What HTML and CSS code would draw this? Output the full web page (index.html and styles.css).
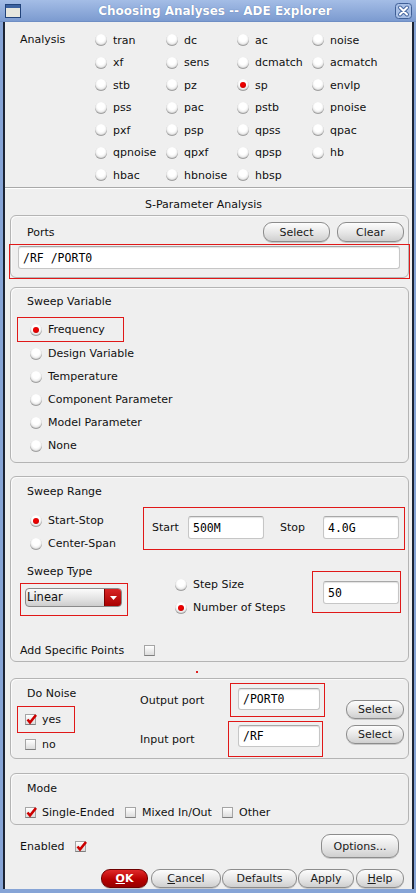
FILE: index.html
```html
<!DOCTYPE html>
<html>
<head>
<meta charset="utf-8">
<title>Choosing Analyses -- ADE Explorer</title>
<link rel="stylesheet" href="styles.css">
</head>
<body>
<div class="frame">
  <div class="titlebar">
    <svg class="winicon" width="16" height="14" viewBox="0 0 16 14">
      <rect x="0.5" y="0.5" width="15" height="13" fill="#e6e6de" stroke="#22437a"/>
      <rect x="1" y="1" width="14" height="3" fill="#3c62a0"/>
    </svg>
    <div class="title">Choosing Analyses -- ADE Explorer</div>
    <svg class="closebtn" width="17" height="16" viewBox="0 0 17 16">
      <rect x="0.5" y="0.5" width="16" height="15" rx="3" fill="#a9c0e6" stroke="#3f5f96"/>
      <path d="M5 4.5 L12 11.5 M12 4.5 L5 11.5" stroke="#4a6aa2" stroke-width="4" stroke-linecap="round"/>
      <path d="M5 4.5 L12 11.5 M12 4.5 L5 11.5" stroke="#ffffff" stroke-width="2" stroke-linecap="round"/>
    </svg>
  </div>
  <div class="body">
    <div class="content">
      <div class="analysis">
        <div class="alabel">Analysis</div>
        <div class="ritem"><span class="radio"></span>tran</div>
        <div class="ritem"><span class="radio"></span>dc</div>
        <div class="ritem"><span class="radio"></span>ac</div>
        <div class="ritem"><span class="radio"></span>noise</div>
        <div class="ritem"><span class="radio"></span>xf</div>
        <div class="ritem"><span class="radio"></span>sens</div>
        <div class="ritem"><span class="radio"></span>dcmatch</div>
        <div class="ritem"><span class="radio"></span>acmatch</div>
        <div class="ritem"><span class="radio"></span>stb</div>
        <div class="ritem"><span class="radio"></span>pz</div>
        <div class="ritem"><span class="radio on"></span>sp</div>
        <div class="ritem"><span class="radio"></span>envlp</div>
        <div class="ritem"><span class="radio"></span>pss</div>
        <div class="ritem"><span class="radio"></span>pac</div>
        <div class="ritem"><span class="radio"></span>pstb</div>
        <div class="ritem"><span class="radio"></span>pnoise</div>
        <div class="ritem"><span class="radio"></span>pxf</div>
        <div class="ritem"><span class="radio"></span>psp</div>
        <div class="ritem"><span class="radio"></span>qpss</div>
        <div class="ritem"><span class="radio"></span>qpac</div>
        <div class="ritem"><span class="radio"></span>qpnoise</div>
        <div class="ritem"><span class="radio"></span>qpxf</div>
        <div class="ritem"><span class="radio"></span>qpsp</div>
        <div class="ritem"><span class="radio"></span>hb</div>
        <div class="ritem"><span class="radio"></span>hbac</div>
        <div class="ritem"><span class="radio"></span>hbnoise</div>
        <div class="ritem"><span class="radio"></span>hbsp</div>
      </div>
      <div class="sep"></div>
      <div class="heading">S-Parameter Analysis</div>

      <div class="group g-ports">
        <div class="ports-row">
          <span class="glabel-inline">Ports</span>
          <span class="flexfill"></span>
          <span class="btn b-sel">Select</span>
          <span class="btn b-clear">Clear</span>
        </div>
        <div class="redbox rb-ports"><div class="field f-ports">/RF /PORT0</div></div>
      </div>

      <div class="group g-var">
        <div class="glabel">Sweep Variable</div>
        <div class="redbox rb-freq"><span class="radio on"></span><span class="rtext">Frequency</span></div>
        <div class="vrow"><span class="radio"></span><span class="rtext">Design Variable</span></div>
        <div class="vrow"><span class="radio"></span><span class="rtext">Temperature</span></div>
        <div class="vrow"><span class="radio"></span><span class="rtext">Component Parameter</span></div>
        <div class="vrow"><span class="radio"></span><span class="rtext">Model Parameter</span></div>
        <div class="vrow"><span class="radio"></span><span class="rtext">None</span></div>
      </div>

      <div class="group g-range">
        <div class="glabel g-range-label">Sweep Range</div>
        <div class="range-row">
          <div class="range-left">
            <div class="srow"><span class="radio on"></span><span class="rtext">Start-Stop</span></div>
            <div class="srow"><span class="radio"></span><span class="rtext">Center-Span</span></div>
          </div>
          <div class="redbox rb-startstop">
            <span class="lbl-start">Start</span>
            <span class="field f-num">500M</span>
            <span class="lbl-stop">Stop</span>
            <span class="field f-num">4.0G</span>
          </div>
        </div>
        <div class="type-row">
          <div class="type-col1">
            <div class="glabel-block">Sweep Type</div>
            <div class="redbox rb-dd">
              <div class="dropdown">
                <span class="dd-text">Linear</span>
                <span class="dd-arrow">
                  <svg width="9" height="6" viewBox="0 0 9 6"><path d="M1 1 L8 1 L4.5 5 Z" fill="#ffffff"/></svg>
                </span>
              </div>
            </div>
          </div>
          <div class="type-col2">
            <div class="srow"><span class="radio"></span><span class="rtext">Step Size</span></div>
            <div class="srow"><span class="radio on"></span><span class="rtext">Number of Steps</span></div>
          </div>
          <div class="redbox rb-steps"><span class="field f-num">50</span></div>
        </div>
        <div class="add-row">
          <span class="add-label">Add Specific Points</span>
          <span class="cb"></span>
        </div>
      </div>

      <div class="gap-dot"><span class="dot"></span></div>

      <div class="group g-noise">
        <div class="noise-a">
          <div class="glabel">Do Noise</div>
          <div class="redbox rb-yes">
            <span class="cb on"><svg class="tick" width="13" height="12" viewBox="0 0 13 12"><path d="M2.5 6.5 L5 9.5 L11 2" fill="none" stroke="#cc0000" stroke-width="2.6"/></svg></span>
            <span class="ctext">yes</span>
          </div>
          <div class="no-row"><span class="cb"></span><span class="ctext">no</span></div>
        </div>
        <div class="noise-b">
          <span class="plabel">Output port</span>
          <div class="redbox rb-out"><span class="field f-port">/PORT0</span></div>
          <span class="plabel">Input port</span>
          <div class="redbox rb-in"><span class="field f-port">/RF</span></div>
        </div>
        <div class="noise-d">
          <span class="btn b-sel2">Select</span>
          <span class="btn b-sel2">Select</span>
        </div>
      </div>

      <div class="group g-mode">
        <div class="glabel">Mode</div>
        <div class="mode-row">
          <div class="mitem mi1"><span class="cb on"><svg class="tick" width="13" height="12" viewBox="0 0 13 12"><path d="M2.5 6.5 L5 9.5 L11 2" fill="none" stroke="#cc0000" stroke-width="2.6"/></svg></span><span class="ctext">Single-Ended</span></div>
          <div class="mitem mi2"><span class="cb"></span><span class="ctext">Mixed In/Out</span></div>
          <div class="mitem"><span class="cb"></span><span class="ctext">Other</span></div>
        </div>
      </div>

      <div class="enabled-row">
        <span class="en-label">Enabled</span>
        <span class="cb on"><svg class="tick" width="13" height="12" viewBox="0 0 13 12"><path d="M2.5 6.5 L5 9.5 L11 2" fill="none" stroke="#cc0000" stroke-width="2.6"/></svg></span>
        <span class="flexfill"></span>
        <span class="btn b-opt">Options...</span>
      </div>

      <div class="bottom-row">
        <span class="btn b-ok"><u>O</u>K</span>
        <span class="btn b-cancel"><u>C</u>ancel</span>
        <span class="btn b-def">Defaults</span>
        <span class="btn b-apply">Apply</span>
        <span class="btn b-help"><u>H</u>elp</span>
      </div>
    </div>
  </div>
</div>
</body>
</html>
```
FILE: styles.css
```css
html, body {
  margin: 0;
  padding: 0;
  background: #efefef;
}
body {
  font-family: "DejaVu Sans", "Liberation Sans", sans-serif;
  font-size: 11px;
  color: #111;
}
.frame {
  width: 416px;
  height: 893px;
  background: #86a4d6;
  overflow: hidden;
}
.titlebar {
  height: 22px;
  display: flex;
  align-items: center;
  background: linear-gradient(#a4bde6, #7c9bd0);
  box-sizing: border-box;
  border-bottom: 1px solid #6f8ec4;
}
.winicon {
  margin-left: 5px;
  flex: none;
}
.title {
  flex: 1;
  text-align: center;
  color: #fff;
  font-weight: bold;
  font-size: 12px;
  padding-left: 14px;
  text-shadow: 0 0 1px #4c6aa0;
}
.closebtn {
  margin-right: 4px;
  flex: none;
}
.body {
  padding: 0 2px 4px 3px;
}
.content {
  height: 867px;
  background: #efefef;
  border-left: 2px solid #1c2434;
  border-right: 2px solid #1c2434;
  box-sizing: border-box;
}

/* analysis grid */
.analysis {
  height: 165px;
  box-sizing: border-box;
  padding: 7px 0 0 15px;
  display: grid;
  grid-template-columns: 75px 71px 71px 75px 1fr;
  grid-auto-rows: 22.5px;
}
.alabel {
  grid-column: 1;
  grid-row: 1 / span 7;
  line-height: 22.5px;
}
.ritem {
  display: flex;
  align-items: center;
  gap: 6px;
  white-space: nowrap;
}
.radio {
  position: relative;
  display: inline-block;
  flex: none;
  width: 12px;
  height: 12px;
  border-radius: 50%;
  background: radial-gradient(circle at 50% 35%, #ffffff 35%, #ececec 60%, #b5b5b5 100%);
  box-shadow: inset 0 -1px 1px #9a9a9a;
}
.radio.on::after {
  content: "";
  position: absolute;
  left: 3px;
  top: 3px;
  width: 6px;
  height: 6px;
  border-radius: 50%;
  background: radial-gradient(circle at 45% 40%, #ee0000 30%, #b00000 100%);
}
.sep {
  height: 1px;
  background: #a9a9a9;
  border-bottom: 1px solid #ffffff;
}
.heading {
  margin-top: 9px;
  line-height: 14px;
  text-align: center;
  padding-right: 10px;
}

/* groups */
.group {
  border: 1px solid #b4b4b4;
  border-radius: 6px;
  margin: 0 3px 0 5px;
  box-sizing: border-box;
  box-shadow: inset 1px 1px 0 #fafafa;
}
.glabel {
  line-height: 14px;
  padding-left: 16px;
}
.redbox {
  border: 1px solid #e01818;
  box-sizing: border-box;
}
.flexfill {
  flex: 1;
}

/* buttons */
.btn {
  display: inline-flex;
  align-items: center;
  justify-content: center;
  box-sizing: border-box;
  border: 1px solid #8c8c8c;
  border-radius: 9px;
  background: linear-gradient(#fdfdfd, #e6e6e6 55%, #cfcfcf);
  color: #1a1a1a;
  font-size: 11px;
  box-shadow: 0 1px 0 #c8c8c8;
}
.btn u {
  text-decoration: underline;
}

/* text fields */
.field {
  display: flex;
  align-items: center;
  box-sizing: border-box;
  background: #fff;
  border: 1px solid #c6c6c6;
  border-top-color: #a8a8a8;
  border-radius: 3px;
  box-shadow: inset 0 1px 1px rgba(0, 0, 0, 0.12);
  font-family: "DejaVu Sans Mono", "Liberation Mono", monospace;
  font-size: 11.5px;
  color: #000;
  padding-left: 4px;
}

/* ports */
.g-ports {
  margin-top: 3px;
  height: 63px;
  padding-top: 6px;
}
.ports-row {
  display: flex;
  align-items: center;
  height: 20px;
  padding: 0 4px 0 16px;
}
.b-sel, .b-clear {
  width: 67px;
  height: 20px;
}
.b-clear {
  margin-left: 7px;
}
.rb-ports {
  margin: 2px -2px 0 -2px;
  height: 35px;
  padding: 1px 9px 0 8px;
}
.f-ports {
  height: 23px;
}

/* sweep variable */
.g-var {
  margin-top: 9px;
  height: 176px;
  padding-top: 7px;
}
.rb-freq {
  margin: 8px 0 0 6px;
  width: 107px;
  height: 25px;
  padding-left: 12px;
  display: flex;
  align-items: center;
}
.vrow, .srow {
  height: 23px;
  display: flex;
  align-items: center;
  white-space: nowrap;
}
.vrow {
  padding-left: 19px;
}
.rtext {
  margin-left: 6px;
}

/* sweep range */
.g-range {
  margin-top: 13px;
  height: 186px;
  padding-top: 8px;
}
.range-row {
  display: flex;
  margin-top: 8px;
}
.range-left {
  width: 132px;
  flex: none;
  box-sizing: border-box;
  padding: 2px 0 0 19px;
}
.rb-startstop {
  width: 262px;
  height: 43px;
  padding: 8px 0 0 8px;
  display: flex;
  align-items: flex-start;
}
.lbl-start, .lbl-stop {
  height: 23px;
  display: flex;
  align-items: center;
}
.lbl-start {
  width: 36px;
}
.lbl-stop {
  width: 43px;
  margin-left: 16px;
}
.f-num {
  width: 76px;
  height: 23px;
  flex: none;
}
.type-row {
  display: flex;
  margin-top: 10px;
}
.type-col1 {
  width: 164px;
  flex: none;
}
.glabel-block {
  line-height: 14px;
  padding-left: 16px;
}
.rb-dd {
  margin: 4px 0 0 9px;
  width: 108px;
  height: 33px;
  padding: 4px 0 0 4px;
}
.dropdown {
  width: 97px;
  height: 19px;
  box-sizing: border-box;
  display: flex;
  border: 1px solid #8a8a8a;
  border-radius: 4px;
  overflow: hidden;
  background: linear-gradient(#fbfbfb, #e2e2e2 60%, #cdcdcd);
}
.dd-text {
  flex: 1;
  padding-left: 1px;
  line-height: 17px;
  font-size: 11.5px;
}
.dd-arrow {
  width: 16px;
  flex: none;
  display: flex;
  align-items: center;
  justify-content: center;
  background: linear-gradient(#d82424, #a80000);
  border-left: 1px solid #7a0000;
}
.type-col2 {
  width: 137px;
  flex: none;
  padding-top: 8px;
}
.rb-steps {
  margin-top: 6px;
  width: 89px;
  height: 42px;
  padding: 9px 0 0 10px;
}
.add-row {
  margin-top: 24px;
  padding-left: 9px;
  display: flex;
  align-items: center;
  height: 14px;
}
.add-label {
  width: 124px;
}

/* checkbox */
.cb {
  position: relative;
  display: inline-block;
  flex: none;
  width: 11px;
  height: 11px;
  box-sizing: border-box;
  border: 1px solid #a5a5a5;
  border-bottom-color: #7e7e7e;
  background: linear-gradient(#ffffff, #dcdcdc);
}
.tick {
  position: absolute;
  left: -1px;
  top: -2px;
}
.ctext {
  margin-left: 6px;
  white-space: nowrap;
}

/* red dot */
.gap-dot {
  height: 16px;
  padding-top: 9px;
  box-sizing: border-box;
}
.dot {
  display: block;
  margin-left: 191px;
  width: 2px;
  height: 2px;
  background: #e02020;
}

/* noise */
.g-noise {
  height: 81px;
  display: flex;
}
.noise-a {
  width: 129px;
  flex: none;
  padding-top: 8px;
}
.rb-yes {
  margin: 5px 0 0 6px;
  width: 58px;
  height: 27px;
  padding-left: 7px;
  display: flex;
  align-items: center;
}
.no-row {
  margin-top: 1px;
  height: 20px;
  padding-left: 14px;
  display: flex;
  align-items: center;
}
.noise-b {
  padding-top: 4px;
  display: grid;
  grid-template-columns: 90px 95px;
  row-gap: 2px;
}
.plabel {
  align-self: center;
}
.rb-out {
  width: 95px;
  height: 34px;
  padding: 4px 0 0 7px;
}
.rb-in {
  width: 95px;
  height: 36px;
  margin-left: -2px;
  padding: 3px 0 0 9px;
}
.f-port {
  width: 82px;
  height: 22px;
}
.noise-d {
  margin-left: 21px;
  padding-top: 21px;
  display: flex;
  flex-direction: column;
  gap: 6px;
}
.b-sel2 {
  width: 58px;
  height: 19px;
}

/* mode */
.g-mode {
  margin-top: 14px;
  height: 52px;
  padding-top: 8px;
}
.mode-row {
  margin-top: 8px;
  height: 16px;
  padding-left: 14px;
  display: flex;
  align-items: center;
}
.mitem {
  display: flex;
  align-items: center;
}
.mi1 {
  width: 100px;
}
.mi2 {
  width: 97px;
}

/* enabled */
.enabled-row {
  margin-top: 9px;
  height: 24px;
  padding-left: 15px;
  padding-right: 13px;
  display: flex;
  align-items: center;
}
.en-label {
  width: 55px;
}
.b-opt {
  width: 78px;
  height: 24px;
}

/* bottom buttons */
.bottom-row {
  margin-top: 11px;
  height: 19px;
  display: flex;
  justify-content: flex-end;
  padding-right: 8px;
}
.bottom-row .btn {
  height: 19px;
}
.b-ok {
  width: 47px;
  margin-right: 3px;
  background: linear-gradient(#e02a2a, #b80000 55%, #960000);
  border-color: #6e0000;
  color: #fff;
  font-weight: bold;
}
.b-cancel {
  width: 70px;
}
.b-def {
  width: 75px;
  margin-left: 1px;
}
.b-apply {
  width: 56px;
  margin-left: 1px;
}
.b-help {
  width: 48px;
  margin-left: 2px;
}
```
